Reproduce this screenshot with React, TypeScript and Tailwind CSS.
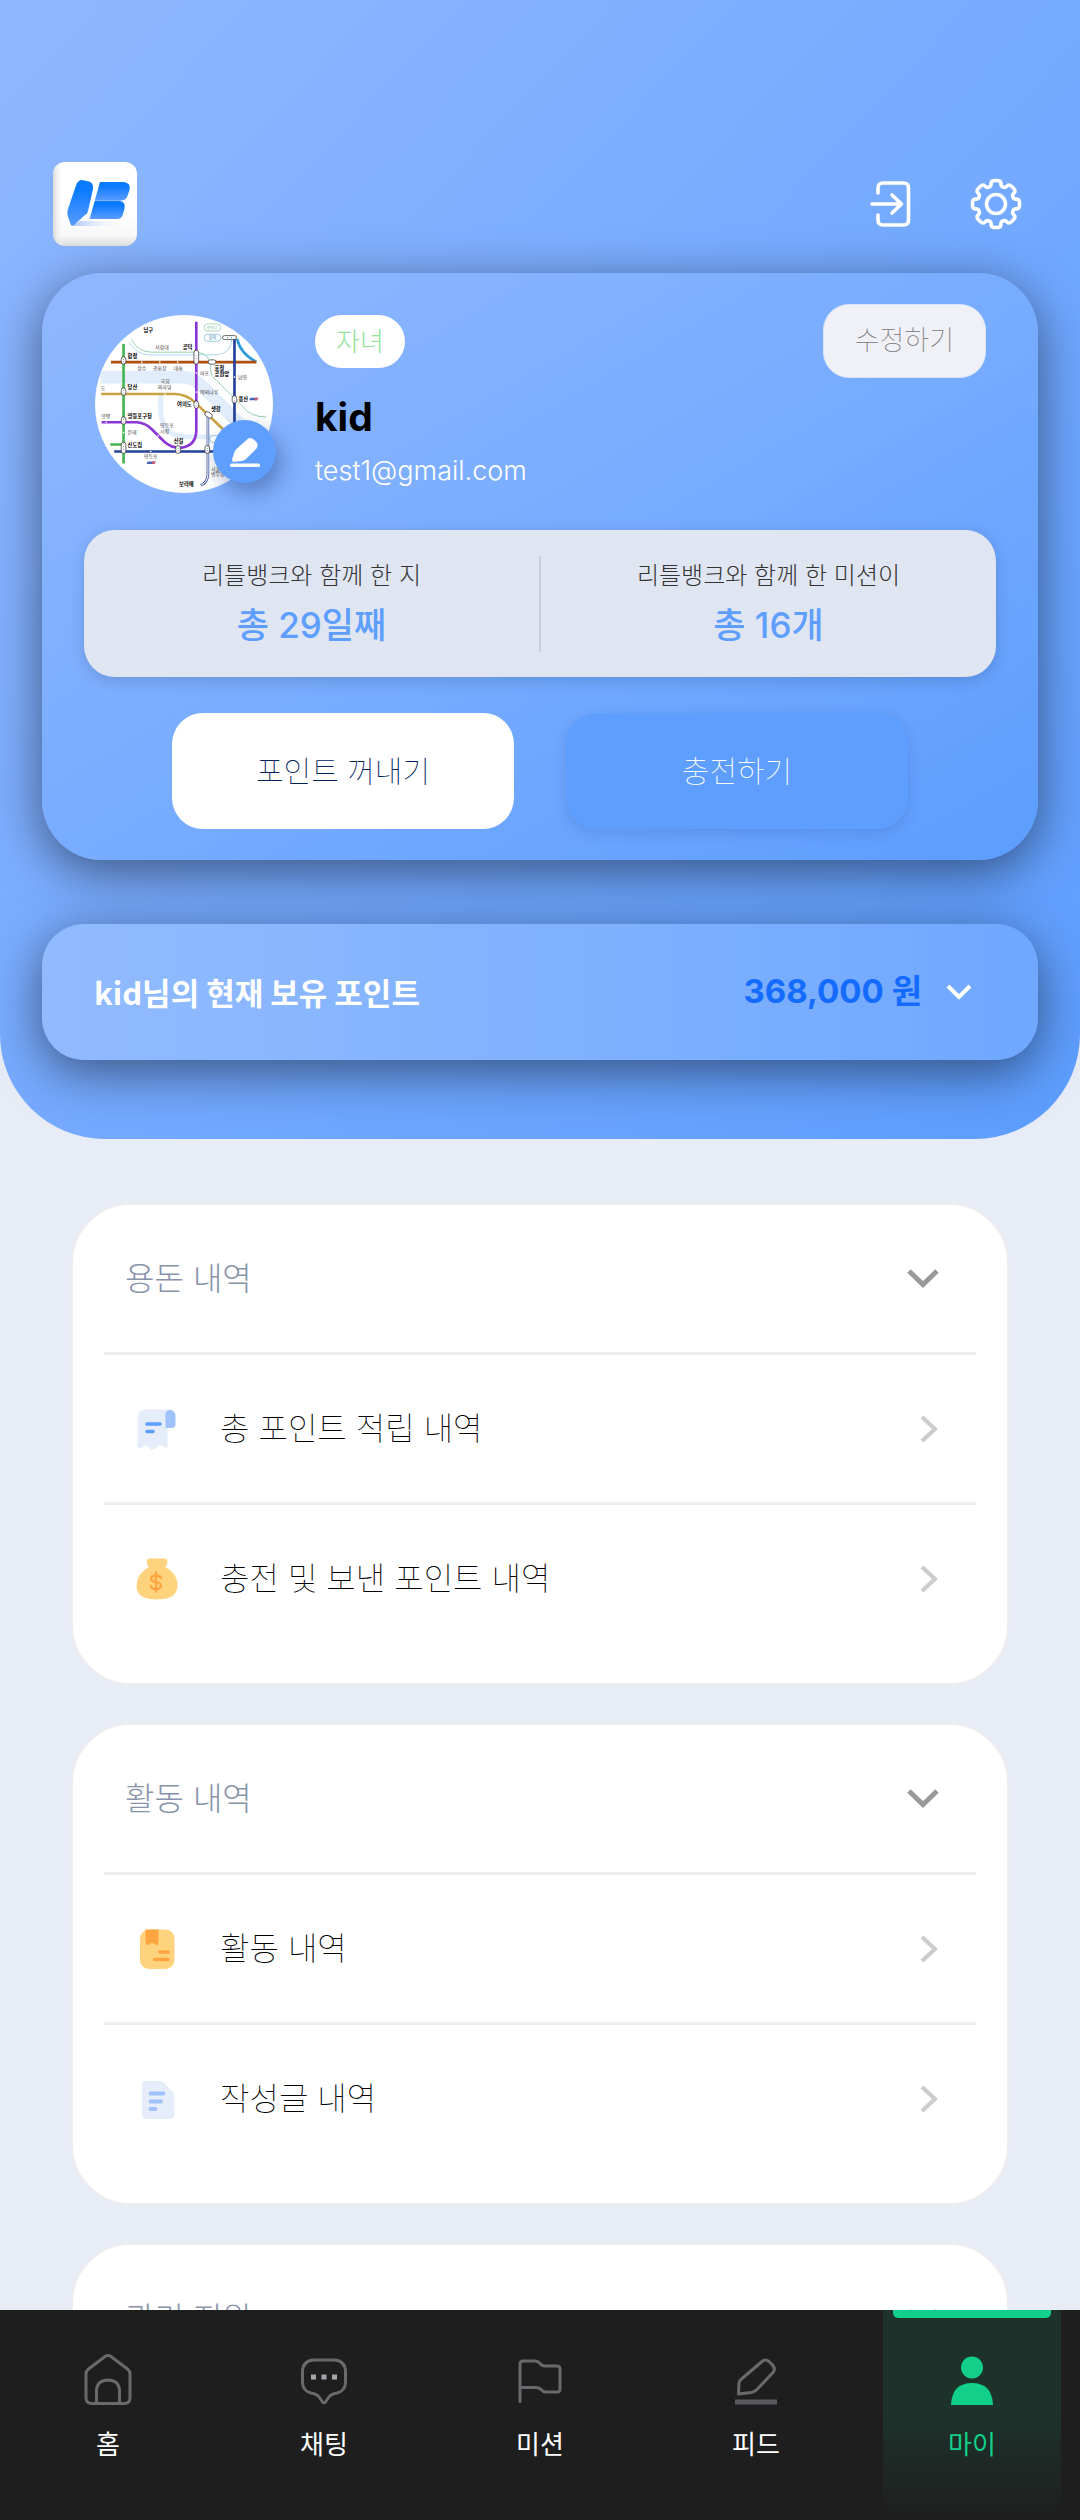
import type { ReactNode } from "react";

const SANS = "font-['Inter','Noto_Sans_CJK_KR',sans-serif]";
const KR = "font-['Noto_Sans_CJK_KR',sans-serif]";

function gearPath(cx: number, cy: number, outer: number, inner: number) {
  const pts: [number, number][] = [];
  for (let k = 0; k < 8; k++) {
    const ring: [number, number][] = [
      [outer, -12],
      [outer, 12],
      [inner, 15],
      [inner, 30],
    ];
    for (const [r, off] of ring) {
      const a = ((k * 45 + off - 90) * Math.PI) / 180;
      pts.push([cx + r * Math.cos(a), cy + r * Math.sin(a)]);
    }
  }
  const mid = (a: [number, number], b: [number, number], t: number) =>
    `${(a[0] + (b[0] - a[0]) * t).toFixed(1)} ${(a[1] + (b[1] - a[1]) * t).toFixed(1)}`;
  const n = pts.length;
  let d = "";
  for (let i = 0; i < n; i++) {
    const prev = pts[(i + n - 1) % n];
    const cur = pts[i];
    const next = pts[(i + 1) % n];
    d += `${i === 0 ? "M" : "L"}${mid(cur, prev, 0.45)}Q${cur[0].toFixed(1)} ${cur[1].toFixed(1)} ${mid(cur, next, 0.45)}`;
  }
  return d + "Z";
}

function Logo() {
  return (
    <svg viewBox="0 0 84 84" className="size-21" role="img" aria-label="LB">
      <defs>
        <linearGradient id="tile" x1="0" y1="0" x2="0" y2="1">
          <stop offset="0.6" stopColor="#fff" />
          <stop offset="0.88" stopColor="#f7f7f7" />
          <stop offset="1" stopColor="#dcdcdc" />
        </linearGradient>
        <linearGradient id="tileSide" x1="0" y1="0" x2="1" y2="0">
          <stop offset="0" stopColor="#cfcfcf" stopOpacity="0.8" />
          <stop offset="0.13" stopColor="#fff" stopOpacity="0" />
        </linearGradient>
        <linearGradient id="ink" x1="0" y1="0" x2="0" y2="1">
          <stop offset="0.2" stopColor="#0a7aff" />
          <stop offset="1" stopColor="#5a9bff" />
        </linearGradient>
        <linearGradient id="cast" x1="0" y1="0" x2="1" y2="0">
          <stop offset="0" stopColor="#a9c3fb" />
          <stop offset="1" stopColor="#fff" stopOpacity="0" />
        </linearGradient>
      </defs>
      <rect width="84" height="84" rx="12" fill="url(#tile)" />
      <rect width="84" height="84" rx="12" fill="url(#tileSide)" />
      <path d="M27 59H73L70 64H18Z" fill="url(#cast)" />
      <path d="M23.5 22Q25.500 18 29 18L36 19.500Q41 21 40 27L35 49Q34.500 52 32 53L21 63Q18.500 65 17.500 62L14.500 53Q14 50 15 47Z" fill="url(#ink)" />
      <path d="M47 20H71Q78 21 76.500 28L74.500 34Q73 38.500 67 38.700H41.700Z" fill="url(#ink)" />
      <path d="M41.700 39H67Q72.500 40 71.700 46L70 52Q69 57 64 57H36.500Z" fill="url(#ink)" />
    </svg>
  );
}

const mapLabels: { x: number; y: number; t: string; bold?: boolean }[] = [
  { x: 190, y: 95, t: "남구", bold: true },
  { x: 225, y: 145, t: "서강대" },
  { x: 308, y: 144, t: "공덕", bold: true },
  { x: 142, y: 171, t: "합정", bold: true },
  { x: 171, y: 208, t: "상수" },
  { x: 218, y: 208, t: "광흥창" },
  { x: 281, y: 208, t: "대흥" },
  { x: 360, y: 224, t: "마포" },
  { x: 404, y: 209, t: "효창", bold: true },
  { x: 404, y: 227, t: "공원앞", bold: true },
  { x: 474, y: 235, t: "남영" },
  { x: 241, y: 249, t: "국회" },
  { x: 233, y: 267, t: "의사당" },
  { x: 142, y: 267, t: "당산", bold: true },
  { x: 62, y: 268, t: "도" },
  { x: 360, y: 281, t: "여의나루" },
  { x: 476, y: 302, t: "용산", bold: true },
  { x: 291, y: 318, t: "여의도", bold: true },
  { x: 393, y: 333, t: "샛강", bold: true },
  { x: 63, y: 353, t: "양평" },
  { x: 142, y: 353, t: "영등포구청", bold: true },
  { x: 240, y: 381, t: "영등포" },
  { x: 240, y: 398, t: "시장" },
  { x: 142, y: 401, t: "문래" },
  { x: 281, y: 428, t: "신길", bold: true },
  { x: 142, y: 440, t: "신도림", bold: true },
  { x: 191, y: 474, t: "영등포" },
  { x: 393, y: 512, t: "서울" },
  { x: 393, y: 528, t: "병무청" },
  { x: 297, y: 558, t: "보라매", bold: true },
];

const interchanges: [number, number, number][] = [
  [130, 180, 22],
  [130, 274, 22],
  [130, 361, 22],
  [130, 443, 34],
  [349, 170, 42],
  [349, 313, 22],
  [464, 297, 22],
  [294, 448, 24],
  [382, 448, 24],
];

const stops: [number, number][] = [
  [185, 185],
  [239, 185],
  [293, 185],
  [349, 218],
  [349, 275],
  [464, 230],
  [255, 281],
  [78, 366],
  [130, 397],
  [234, 407],
  [212, 454],
];

function SubwayAvatar() {
  return (
    <svg viewBox="44 43 536 536" className="size-full" role="img" aria-label="프로필 사진">
      <defs>
        <clipPath id="round">
          <circle cx="312" cy="311" r="268" />
        </clipPath>
      </defs>
      <g clipPath="url(#round)">
        <rect x="44" y="43" width="536" height="536" fill="#fff" />
        <g fill="none" strokeLinejoin="round">
          <path d="M60 230H310Q345 232 372 262L480 372" stroke="#e1edfb" strokeWidth="38" />
          <path d="M242 285V330Q244 410 320 410H400" stroke="#e1edfb" strokeWidth="15" />
          <path d="M153 115Q172 155 215 155H350Q392 158 392 200Q390 225 410 240L490 320Q512 350 560 350" stroke="#82c5a2" strokeWidth="2.500" />
          <path d="M146 124Q168 163 208 163H410Q455 160 456 112" stroke="#9ccfe6" strokeWidth="2.500" />
          <path d="M472 115Q482 160 530 184" stroke="#2f9bd8" strokeWidth="8" />
          <path d="M92 185H530" stroke="#b04f12" strokeWidth="8" />
          <path d="M130 130V490" stroke="#43b552" strokeWidth="8" />
          <path d="M90 433H130" stroke="#43b552" strokeWidth="8" />
          <path d="M102 454H420" stroke="#23409a" strokeWidth="8" />
          <path d="M464 112V400" stroke="#23409a" strokeWidth="8" />
          <path d="M62 281H285Q320 282 345 306L440 397" stroke="#c9a241" strokeWidth="8" />
          <path d="M64 366H170Q197 368 215 387L252 424Q272 443 300 443Q349 438 349 390V63" stroke="#8a35d6" strokeWidth="8" />
          <path d="M384 345V520Q384 548 362 556" stroke="#4b62a6" strokeWidth="8" />
          <path d="M384 345V520Q384 548 362 556" stroke="#fff" strokeWidth="3" />
        </g>
        {stops.map(([x, y]) => (
          <circle key={`${x}-${y}`} cx={x} cy={y} r="2.500" fill="#fff" />
        ))}
        {interchanges.map(([x, y, h]) => (
          <g key={`${x}-${y}`}>
            <rect x={x - 7} y={y - h / 2} width="14" height={h} rx="7" fill="#fff" stroke="#222" strokeWidth="2" />
            <circle cx={x} cy={y - 4} r="1.500" fill="#3aa04a" />
            <circle cx={x} cy={y + 4} r="1.500" fill="#8a35d6" />
          </g>
        ))}
        <rect x="385" y="178" width="23" height="13" rx="6" fill="#fff" stroke="#222" strokeWidth="2" />
        <rect x="374" y="337" width="24" height="14" rx="7" transform="rotate(35 386 344)" fill="#fff" stroke="#222" strokeWidth="2" />
        <rect x="428" y="105" width="42" height="12" rx="6" fill="#fff" stroke="#222" strokeWidth="2" />
        <circle cx="443" cy="111" r="2" fill="#3aa04a" />
        <circle cx="455" cy="111" r="2" fill="#2f9bd8" />
        <rect x="373" y="70" width="50" height="21" rx="10" fill="#fff" stroke="#82c5a2" strokeWidth="2" />
        <rect x="373" y="101" width="50" height="21" rx="10" fill="#fff" stroke="#6bb0cf" strokeWidth="2" />
        <rect x="390" y="406" width="50" height="21" rx="10" fill="#fff" stroke="#6bb0cf" strokeWidth="2" />
        <text x="386" y="116" className="fill-[#4a8fae] text-[13px]">경의</text>
        <text x="380" y="85" className="fill-[#82c5a2] text-[12px]">경의선</text>
        <path d="M512 292h24l-4 8h-24zM203 484h24l-4 8h-24z" fill="#4a62b5" />
        <path d="M526 292h10l-4 8h-8zM217 484h10l-4 8h-8z" fill="#d65a6c" />
        {mapLabels.map((l) => (
          <text
            key={`${l.x}-${l.y}`}
            x={l.x}
            y={l.y}
            className={l.bold ? "fill-black text-[16px] font-bold" : "fill-[#444] text-[15px]"}
          >
            {l.t}
          </text>
        ))}
      </g>
    </svg>
  );
}

function ReceiptIcon() {
  return (
    <svg viewBox="0 0 42 42" className="size-[42px]" aria-hidden="true">
      <path d="M1.500 10Q1.500 2 10 1.500H34V14L31.500 16V38Q31.500 40.500 29 39.500L26 37.500Q24.500 36.500 23 37.500L18.500 41Q16.500 42 14.500 41L11.500 38Q10 36.500 8.500 38L5.500 39.800Q1.500 41 1.500 38Z" fill="#e4edf9" />
      <path d="M29.500 7Q29.500 2 34.500 2Q39.500 2.500 39.500 8.500V16Q39.500 20 35.500 20H29.500Z" fill="#9fc2fc" />
      <path d="M11 16H24M11 23.500H17" stroke="#5e9eff" strokeWidth="3.600" strokeLinecap="round" />
    </svg>
  );
}

function MoneyBagIcon() {
  return (
    <svg viewBox="0 0 42 42" className="size-[42px]" aria-hidden="true">
      <path d="M13.500 0.500H28.500Q32 1 31.500 4.500Q31 7.500 29 9Q41.500 15 41.500 28Q41 41.500 21 41.500Q0.500 41.500 0.500 28Q1 15 13 9Q11 7.500 10.800 4.500Q10.500 1 13.500 0.500Z" fill="#ffd27d" />
      <path d="M25 20Q24 17.500 20 17.500Q15 17.800 15 21Q15.500 23.500 20 24.200Q25 25 25 28Q24.500 31 20 31Q15.500 31 15 28M20 14.500V33.500" fill="none" stroke="#ffa53f" strokeWidth="2.300" strokeLinecap="round" />
    </svg>
  );
}

function BookmarkNoteIcon() {
  return (
    <svg viewBox="0 0 42 42" className="size-[42px]" aria-hidden="true">
      <rect x="4" y="1.500" width="34.500" height="39.500" rx="9" fill="#ffd27d" />
      <path d="M9.500 1.500H22.500V15Q22.500 17.500 20 17L17 15Q16 14.500 15 15L12 17Q9.500 17.500 9.500 15Z" fill="#ffa53f" />
      <path d="M24 24H32M18.500 31.500H32" stroke="#ffa53f" strokeWidth="3.600" strokeLinecap="round" />
    </svg>
  );
}

function DocumentIcon() {
  return (
    <svg viewBox="0 0 42 42" className="size-[42px]" aria-hidden="true">
      <path d="M10 3H24Q26 3 27.500 4.500L37 14Q38.500 15.500 38.500 18V36Q38.500 41 33.500 41H11Q6 41 6 36V7Q6 3 10 3Z" fill="#e4edf9" />
      <path d="M14.500 15.500H27.500M14.500 23.500H25M14.500 31H19.500" stroke="#9fc2fc" strokeWidth="3.800" strokeLinecap="round" />
    </svg>
  );
}

type Entry = { label: string; icon: ReactNode };

function ListCard({ title, entries }: { title: string; entries: Entry[] }) {
  return (
    <section className="rounded-[60px] border-2 border-[#eee] bg-white px-[31px] pb-[31px]">
      <button type="button" className="flex h-[147px] w-full items-center justify-between pr-[37px] pl-[21px]">
        <h2 className="text-[32px] leading-12 font-light text-[#8793aa]">{title}</h2>
        <svg viewBox="0 0 32 20" className="h-5 w-8" aria-hidden="true">
          <path d="M2 2L16 15.500L30 2" fill="none" stroke="#999" strokeWidth="5" />
        </svg>
      </button>
      <ul>
        {entries.map((e) => (
          <li key={e.label} className="border-t-3 border-[#eee]">
            <a href="#" className="flex h-[147px] items-center pr-[38px] pl-8">
              {e.icon}
              <span className="ml-[42px] flex-1 text-[32px] leading-12 font-thin text-black">{e.label}</span>
              <svg viewBox="0 0 18 28" className="h-7 w-[18px]" aria-hidden="true">
                <path d="M2 2L15 14L2 26" fill="none" stroke="#ccc" strokeWidth="4" />
              </svg>
            </a>
          </li>
        ))}
      </ul>
    </section>
  );
}

function NavIcon({ children }: { children: ReactNode }) {
  return (
    <svg viewBox="0 0 50 56" className="h-14 w-[50px]" fill="none" stroke="#69696d" strokeWidth="3" strokeLinejoin="round" strokeLinecap="round" aria-hidden="true">
      {children}
    </svg>
  );
}

const navItems: { label: string; active?: boolean; icon: ReactNode }[] = [
  {
    label: "홈",
    icon: (
      <NavIcon>
        <path d="M3 46V22Q3 19 5.500 17L22 4.500Q25 2.500 28 4.500L44.500 17Q47 19 47 22V46Q47 51.500 41 51.500H9Q3 51.500 3 46Z" />
        <path d="M13.500 51V38Q14 28.500 25 28Q36 28.500 36.500 38V51" />
      </NavIcon>
    ),
  },
  {
    label: "채팅",
    icon: (
      <NavIcon>
        <path d="M15 8H35Q46.500 8.500 46.500 20V31Q46 39 38 41Q32 42 29.500 45.500L26.500 50Q25 51.500 23.500 50L20.500 45.500Q18 42 12 41Q4 39 3.500 31V20Q3.500 8.500 15 8Z" />
        <path d="M12 25h5M22.500 25h5M33 25h5" stroke="#a5a5ad" strokeWidth="5" strokeLinecap="butt" />
      </NavIcon>
    ),
  },
  {
    label: "미션",
    icon: (
      <NavIcon>
        <path d="M5 49.500V12Q5 9 8 9H20Q23 9 25 11.500Q27 14 30 14H42Q45 14 45 17V37Q45 40 42 40H31Q28 40 26 37.500Q24 35.500 21 35.500H5" />
      </NavIcon>
    ),
  },
  {
    label: "피드",
    icon: (
      <NavIcon>
        <path d="M31 9.500Q34.500 6.500 38 9.500L41.500 13Q45 17 42 20.500L26 37.500Q23.500 40 20 40.500L7.500 42L8 31Q8.500 28.500 10.500 27Z" />
        <path d="M4 50H46" stroke="#5a5a5e" strokeWidth="5" strokeLinecap="butt" />
      </NavIcon>
    ),
  },
  {
    label: "마이",
    active: true,
    icon: (
      <svg viewBox="0 0 50 56" className="h-14 w-[50px]" fill="#12cf8a" aria-hidden="true">
        <circle cx="25" cy="15.500" r="11" />
        <path d="M4 53Q5 31 25 31Q45 31 46 53Z" />
      </svg>
    ),
  },
];

export default function App() {
  return (
    <div className={`flex h-screen flex-col bg-[#e7ecf7] ${SANS}`}>
      <main className="min-h-0 flex-1 overflow-y-auto [scrollbar-width:none]">
        <div className="rounded-b-[105px] bg-linear-to-br from-[#8fb7ff] to-[#5c9dff] px-[42px] pt-[162px] pb-[79px]">
          <header className="flex items-center justify-between pr-[15px] pl-[11px]">
            <Logo />
            <div className="flex items-center gap-[52px]">
              <button type="button" aria-label="로그아웃">
                <svg viewBox="0 0 52 52" className="size-[52px]" fill="none" stroke="#fff" strokeWidth="3.600" strokeLinecap="round" strokeLinejoin="round">
                  <path d="M13 15V10Q13 5 18 5H38.500Q43.500 5 43.500 10V42Q43.500 47 38.500 47H18Q13 47 13 42V37M7 26H36M27 17L36.500 26L27 35" />
                </svg>
              </button>
              <button type="button" aria-label="설정">
                <svg viewBox="0 0 54 54" className="size-[54px]" fill="none" stroke="#fff" strokeWidth="3.600">
                  <path d={gearPath(27, 27, 24, 18.5)} />
                  <circle cx="27" cy="27" r="9.500" />
                </svg>
              </button>
            </div>
          </header>

          <section className="mt-[27px] rounded-[60px] bg-linear-to-br from-[#8fb7ff] via-[#78acff] to-[#5c9dff] px-[42px] py-[31px] shadow-[0_12px_50px_rgba(0,0,0,0.5)]">
            <div className="flex items-start">
              <div className="relative mt-[11px] ml-[11px] size-[178px]">
                <SubwayAvatar />
                <button
                  type="button"
                  aria-label="프로필 사진 변경"
                  className="absolute -right-[3px] bottom-[10px] grid size-[63px] place-items-center rounded-full bg-[#5e9eff] shadow-[6px_10px_20px_rgba(40,70,130,0.45)]"
                >
                  <svg viewBox="0 0 30 30" className="size-[30px]" fill="#fff" aria-hidden="true">
                    <path d="M17 2.500Q20 0 23 2L26 4.500Q29 8 26.500 11.500L16.500 21.500Q14 24 11 24L4 25Q2 25 2 22.500L4.500 15Q5 13 7 11.500Z" />
                    <rect x="0" y="26.500" width="30" height="3.500" rx="1.500" />
                  </svg>
                </button>
              </div>
              <div className="mt-[11px] ml-[42px] flex-1">
                <span className="inline-flex h-[53px] items-center rounded-full bg-white px-[21px] text-[26px] leading-none font-light text-[#93e39b]">자녀</span>
                <h1 className="mt-[27px] text-[39px] leading-11 font-bold text-black">kid</h1>
                <p className="mt-[14px] text-[27px] leading-9 font-light text-white">test1@gmail.com</p>
              </div>
              <button type="button" className="mr-[10px] h-[74px] rounded-[26px] border border-[#d9e4fa] bg-[#f0f1f7] px-[31px] text-[27px] font-thin text-[#777]">
                수정하기
              </button>
            </div>

            <dl className="mt-[37px] flex items-center rounded-[31px] bg-[#dfe5f1] pt-[26px] pb-[25px] text-center shadow-[0_4px_16px_rgba(0,0,0,0.15)]">
              <div className="flex-1 border-r-2 border-[#c9cedb]">
                <dt className="text-[24px] leading-10 font-light text-[#333]">리틀뱅크와 함께 한 지</dt>
                <dd className="pt-[5px] pb-[3px] text-[35px] leading-12 font-medium text-[#5e9eff]">총 29일째</dd>
              </div>
              <div className="flex-1">
                <dt className="text-[24px] leading-10 font-light text-[#333]">리틀뱅크와 함께 한 미션이</dt>
                <dd className="pt-[5px] pb-[3px] text-[35px] leading-12 font-medium text-[#5e9eff]">총 16개</dd>
              </div>
            </dl>

            <div className="mt-9 flex justify-center gap-[52px] px-[88px] text-[30px]">
              <button type="button" className="h-[116px] flex-1 rounded-[31px] bg-white font-thin text-[#00215c]">포인트 꺼내기</button>
              <button type="button" className="h-[116px] flex-1 rounded-[31px] bg-[#5e9eff] font-thin text-white shadow-[0_4px_14px_rgba(40,70,130,0.2)]">충전하기</button>
            </div>
          </section>

          <button type="button" className="mt-16 flex h-[136px] w-full items-center rounded-[42px] bg-linear-to-r from-[#91bbff] to-[#70a8ff] px-[52px] shadow-[0_12px_50px_rgba(0,0,0,0.5)]">
            <span className={`text-[31px] font-bold text-white ${KR}`}>kid님의 현재 보유 포인트</span>
            <span className="ml-auto text-[33px] font-bold text-[#146bff]">368,000 원</span>
            <svg viewBox="0 0 26 16" className="mr-[14px] ml-6 h-4 w-[26px]" aria-hidden="true">
              <path d="M2 2L13 13L24 2" fill="none" stroke="#fff" strokeWidth="4" />
            </svg>
          </button>
        </div>

        <div className="flex flex-col gap-[38px] px-[71px] pt-16 pb-16">
          <ListCard
            title="용돈 내역"
            entries={[
              { label: "총 포인트 적립 내역", icon: <ReceiptIcon /> },
              { label: "충전 및 보낸 포인트 내역", icon: <MoneyBagIcon /> },
            ]}
          />
          <ListCard
            title="활동 내역"
            entries={[
              { label: "활동 내역", icon: <BookmarkNoteIcon /> },
              { label: "작성글 내역", icon: <DocumentIcon /> },
            ]}
          />
          <ListCard title="관리 지원" entries={[]} />
        </div>
      </main>

      <nav className="flex bg-[#1e1e1e]">
        {navItems.map((n) => (
          <a
            key={n.label}
            href="#"
            aria-current={n.active ? "page" : undefined}
            className={
              n.active
                ? "relative mx-[19px] flex h-[210px] flex-1 flex-col items-center bg-linear-to-b from-[#1d322b] from-50% to-[#1e1e1e] pt-[42px] text-[#12cf8a]"
                : "flex h-[210px] flex-1 basis-[38px] flex-col items-center pt-[42px] text-white"
            }
          >
            {n.active && <span className="absolute inset-x-[10px] top-0 h-2 rounded-b-[5px] bg-[#12cf8a]" />}
            {n.icon}
            <span className="mt-[19px] text-[26px] leading-9 font-normal">{n.label}</span>
          </a>
        ))}
      </nav>
    </div>
  );
}
